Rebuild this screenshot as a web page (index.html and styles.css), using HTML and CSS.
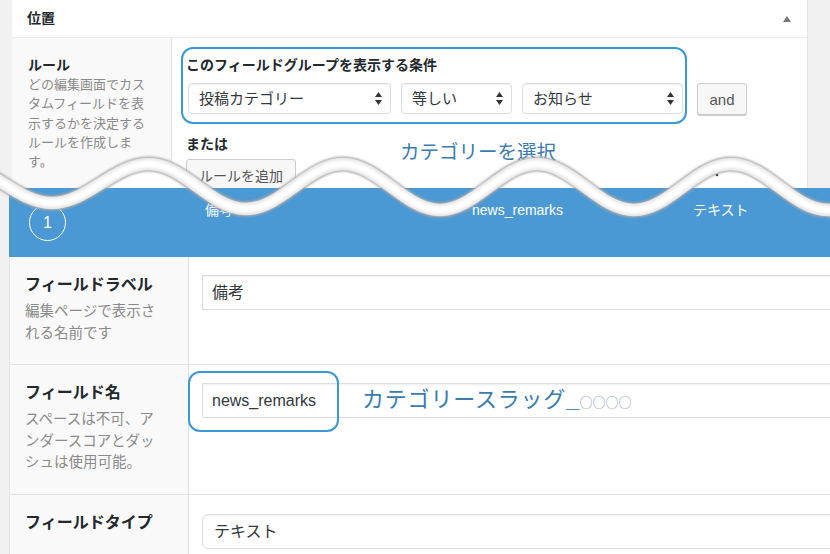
FILE: index.html
```html
<!DOCTYPE html>
<html lang="ja">
<head>
<meta charset="utf-8">
<title>ACF</title>
<link rel="stylesheet" href="styles.css">
</head>
<body>
<div class="page">
  <section class="shot-top">
    <div class="gutter-left"></div>
    <div class="postbox">
      <div class="postbox-head">
        <h2 class="postbox-title">位置</h2>
        <span class="toggle"></span>
      </div>
      <div class="rule-row">
        <div class="rule-label">
          <div class="label-title">ルール</div>
          <p class="label-desc">どの編集画面でカス<br>タムフィールドを表<br>示するかを決定する<br>ルールを作成しま<br>す。</p>
        </div>
        <div class="rule-body">
          <div class="group-title">このフィールドグループを表示する条件</div>
          <div class="rule-line">
            <div class="select sel-param">投稿カテゴリー<svg class="arrows" width="7" height="13" viewBox="0 0 7 13"><path d="M3.5 0 L7 5 H0 Z M0 8 H7 L3.5 13 Z" fill="#333"/></svg></div>
            <div class="select sel-op">等しい<svg class="arrows" width="7" height="13" viewBox="0 0 7 13"><path d="M3.5 0 L7 5 H0 Z M0 8 H7 L3.5 13 Z" fill="#333"/></svg></div>
            <div class="select sel-val">お知らせ<svg class="arrows" width="7" height="13" viewBox="0 0 7 13"><path d="M3.5 0 L7 5 H0 Z M0 8 H7 L3.5 13 Z" fill="#333"/></svg></div>
            <button class="btn btn-and">and</button>
          </div>
          <div class="or-title">または</div>
          <button class="btn btn-add">ルールを追加</button>
          <div class="mark mark-rule"></div>
          <div class="note note-rule">カテゴリーを選択</div>
        </div>
      </div>
    </div>
    <div class="gutter-right"></div>
  </section>

  <section class="shot-bottom">
    <div class="field-bar">
      <div class="bar-order"><span class="order-num">1</span></div>
      <div class="bar-cell">備考</div>
      <div class="bar-cell">news_remarks</div>
      <div class="bar-cell">テキスト</div>
    </div>
    <div class="field-table">
      <div class="field-row">
        <div class="field-label">
          <div class="field-name">フィールドラベル</div>
          <p class="field-desc">編集ページで表示さ<br>れる名前です</p>
        </div>
        <div class="field-input">
          <div class="text-input">備考</div>
        </div>
      </div>
      <div class="field-row">
        <div class="field-label">
          <div class="field-name">フィールド名</div>
          <p class="field-desc">スペースは不可、ア<br>ンダースコアとダッ<br>シュは使用可能。</p>
        </div>
        <div class="field-input">
          <div class="text-input">news_remarks</div>
          <div class="mark mark-name"></div>
          <div class="note note-name">カテゴリースラッグ<span class="note-us">__</span><span class="note-circles">○○○○</span></div>
        </div>
      </div>
      <div class="field-row">
        <div class="field-label">
          <div class="field-name">フィールドタイプ</div>
        </div>
        <div class="field-input">
          <div class="text-input select-type">テキスト</div>
        </div>
      </div>
    </div>
  </section>

  <svg class="tear" width="830" height="260" viewBox="0 0 830 260">
    <defs>
      <clipPath id="below">
        <path d="M -45 164 C -9.75 164 16.75 203 52 203 C 87.25 203 113.75 164 149 164 C 184.25 164 210.75 209 246 209 C 281.25 209 307.75 164 343 164 C 378.25 164 404.75 210 440 210 C 475.25 210 501.75 164 537 164 C 572.25 164 598.75 210 634 210 C 669.25 210 695.75 164 731 164 C 766.25 164 792.75 210 828 210 C 863.25 210 889.75 164 925 164 L 925 300 L -45 300 Z"/>
      </clipPath>
      <filter id="soft" x="-5%" y="-50%" width="110%" height="200%">
        <feGaussianBlur stdDeviation="0.9"/>
      </filter>
      <filter id="softer" x="-5%" y="-50%" width="110%" height="200%">
        <feGaussianBlur stdDeviation="1.4"/>
      </filter>
    </defs>
    <g clip-path="url(#below)">
      <rect x="0" y="140" width="830" height="48" fill="#ffffff"/>
      <rect x="0" y="140" width="9" height="48" fill="#f1f1f1"/>
    </g>
    <circle cx="717" cy="175" r="1.3" fill="#222"/>
    <g fill="none" stroke-linecap="round">
      <path d="M -45 164 C -9.75 164 16.75 203 52 203 C 87.25 203 113.75 164 149 164 C 184.25 164 210.75 209 246 209 C 281.25 209 307.75 164 343 164 C 378.25 164 404.75 210 440 210 C 475.25 210 501.75 164 537 164 C 572.25 164 598.75 210 634 210 C 669.25 210 695.75 164 731 164 C 766.25 164 792.75 210 828 210 C 863.25 210 889.75 164 925 164" stroke="#a9a9a9" stroke-width="15" filter="url(#soft)"/>
      <path d="M -45 164 C -9.75 164 16.75 203 52 203 C 87.25 203 113.75 164 149 164 C 184.25 164 210.75 209 246 209 C 281.25 209 307.75 164 343 164 C 378.25 164 404.75 210 440 210 C 475.25 210 501.75 164 537 164 C 572.25 164 598.75 210 634 210 C 669.25 210 695.75 164 731 164 C 766.25 164 792.75 210 828 210 C 863.25 210 889.75 164 925 164" stroke="#e4e4e4" stroke-width="12.5"/>
      <path d="M -45 164 C -9.75 164 16.75 203 52 203 C 87.25 203 113.75 164 149 164 C 184.25 164 210.75 209 246 209 C 281.25 209 307.75 164 343 164 C 378.25 164 404.75 210 440 210 C 475.25 210 501.75 164 537 164 C 572.25 164 598.75 210 634 210 C 669.25 210 695.75 164 731 164 C 766.25 164 792.75 210 828 210 C 863.25 210 889.75 164 925 164" stroke="#ffffff" stroke-width="8" filter="url(#softer)"/>
    </g>
  </svg>
</div>
</body>
</html>
```

FILE: styles.css
```css
* {
  box-sizing: border-box;
}

html,
body {
  margin: 0;
  padding: 0;
}

body {
  width: 830px;
  height: 554px;
  overflow: hidden;
  background: #f1f1f1;
  font-family: "Liberation Sans", "Noto Sans CJK JP", sans-serif;
  color: #23282d;
}

.page {
  position: relative;
  width: 830px;
  height: 554px;
  overflow: hidden;
}

/* ---------- upper screenshot ---------- */

.shot-top {
  display: flex;
  height: 188px;
  overflow: hidden;
  background: #f1f1f1;
}

.gutter-left {
  width: 12px;
  flex: none;
}

.gutter-right {
  flex: 1;
}

.postbox {
  width: 796px;
  flex: none;
  background: #fff;
  border-right: 1px solid #e5e5e5;
}

.postbox-head {
  height: 38px;
  display: flex;
  align-items: center;
  justify-content: space-between;
  padding: 0 16px 2px 15px;
  border-bottom: 1px solid #eeeeee;
}

.postbox-title {
  margin: 0;
  font-size: 14px;
  font-weight: 700;
  line-height: 20px;
}

.toggle {
  width: 0;
  height: 0;
  margin-top: 3px;
  border-left: 4px solid transparent;
  border-right: 4px solid transparent;
  border-bottom: 6px solid #72777c;
}

.rule-row {
  display: flex;
  height: 150px;
}

.rule-label {
  width: 160px;
  flex: none;
  background: #f9f9f9;
  border-right: 1px solid #e1e1e1;
  padding: 17px 0 0 16px;
}

.label-title {
  font-size: 14px;
  font-weight: 700;
  line-height: 20px;
}

.label-desc {
  margin: 0;
  font-size: 13px;
  line-height: 19.3px;
  color: #8a8a8a;
}

.rule-body {
  position: relative;
  flex: 1;
  padding: 18px 0 0 14px;
}

.group-title {
  font-size: 14px;
  font-weight: 700;
  line-height: 18px;
}

.rule-line {
  display: flex;
  align-items: flex-start;
  gap: 10px;
  margin: 9px 0 0 2px;
}

.select {
  position: relative;
  height: 31px;
  border: 1px solid #dddddd;
  border-radius: 4px;
  background: #fff;
  box-shadow: inset 0 1px 2px rgba(0, 0, 0, 0.07);
  font-size: 15px;
  line-height: 29px;
  padding-left: 10px;
  color: #32373c;
}

.sel-param {
  width: 203px;
}

.sel-op {
  width: 111px;
}

.sel-val {
  width: 161px;
}

.arrows {
  position: absolute;
  right: 8px;
  top: 8px;
}

.btn {
  display: block;
  height: 32px;
  padding: 0;
  border: 1px solid #cccccc;
  border-radius: 3px;
  background: #f7f7f7;
  box-shadow: 0 1px 0 #cccccc;
  font-family: "Liberation Sans", "Noto Sans CJK JP", sans-serif;
  font-size: 14px;
  color: #555555;
}

.btn-and {
  width: 50px;
  margin-left: 4px;
  font-size: 15px;
}

.or-title {
  margin-top: 19px;
  font-size: 14px;
  font-weight: 700;
  line-height: 20px;
}

.btn-add {
  width: 110px;
  margin-top: 5px;
}

/* annotation overlays */

.mark {
  position: absolute;
  border: 2.5px solid #3a98d4;
  border-radius: 12px;
  pointer-events: none;
}

.mark-rule {
  left: 9px;
  top: 9px;
  width: 506px;
  height: 77px;
}

.note {
  position: absolute;
  color: #3a7bb0;
  white-space: nowrap;
}

.note-rule {
  left: 228px;
  top: 102px;
  font-size: 19.5px;
  line-height: 24px;
}

/* ---------- lower screenshot ---------- */

.shot-bottom {
  padding-left: 9px;
  background: #f1f1f1;
}

.field-bar {
  display: grid;
  grid-template-columns: 196px 267px 221px 1fr;
  height: 69px;
  background: #4a98d4;
  color: #ffffff;
  font-size: 14px;
}

.bar-order {
  display: flex;
  align-items: center;
  padding-left: 20px;
}

.order-num {
  display: flex;
  align-items: center;
  justify-content: center;
  width: 37px;
  height: 37px;
  border: 1.5px solid #ffffff;
  border-radius: 50%;
  font-size: 16px;
}

.bar-cell {
  padding-top: 12px;
  line-height: 20px;
}

.field-table {
  background: #ffffff;
  border-left: 1px solid #e5e5e5;
}

.field-row {
  display: grid;
  grid-template-columns: 179px 1fr;
}

.field-row + .field-row {
  border-top: 1px solid #e1e1e1;
}

.field-label {
  background: #f9f9f9;
  border-right: 1px solid #e1e1e1;
  padding: 17px 10px 20px 15px;
}

.field-name {
  font-size: 16px;
  font-weight: 700;
  line-height: 22px;
}

.field-desc {
  margin: 5px 0 0;
  font-size: 14.5px;
  line-height: 21.5px;
  color: #8a8a8a;
}

.field-input {
  position: relative;
  padding: 18px 0 0 13px;
}

.text-input {
  width: 700px;
  height: 35px;
  border: 1px solid #dddddd;
  background: #ffffff;
  box-shadow: inset 0 1px 2px rgba(0, 0, 0, 0.07);
  font-size: 16px;
  line-height: 33px;
  padding-left: 9px;
  color: #32373c;
}

.select-type {
  margin-top: 1px;
  border-radius: 6px;
  padding-left: 11px;
}

.mark-name {
  left: -1px;
  top: 6px;
  width: 151px;
  height: 61px;
}

.note-name {
  left: 173px;
  top: 22px;
  font-size: 22px;
  line-height: 26px;
  letter-spacing: 0.8px;
}

.note-us {
  font-size: 12px;
  letter-spacing: 0;
}

.note-circles {
  font-family: "Noto Sans CJK JP", sans-serif;
  font-size: 13px;
  letter-spacing: 0;
  color: #8aa2b5;
}

/* ---------- torn edge overlay ---------- */

.tear {
  position: absolute;
  left: 0;
  top: 0;
  pointer-events: none;
}
```
